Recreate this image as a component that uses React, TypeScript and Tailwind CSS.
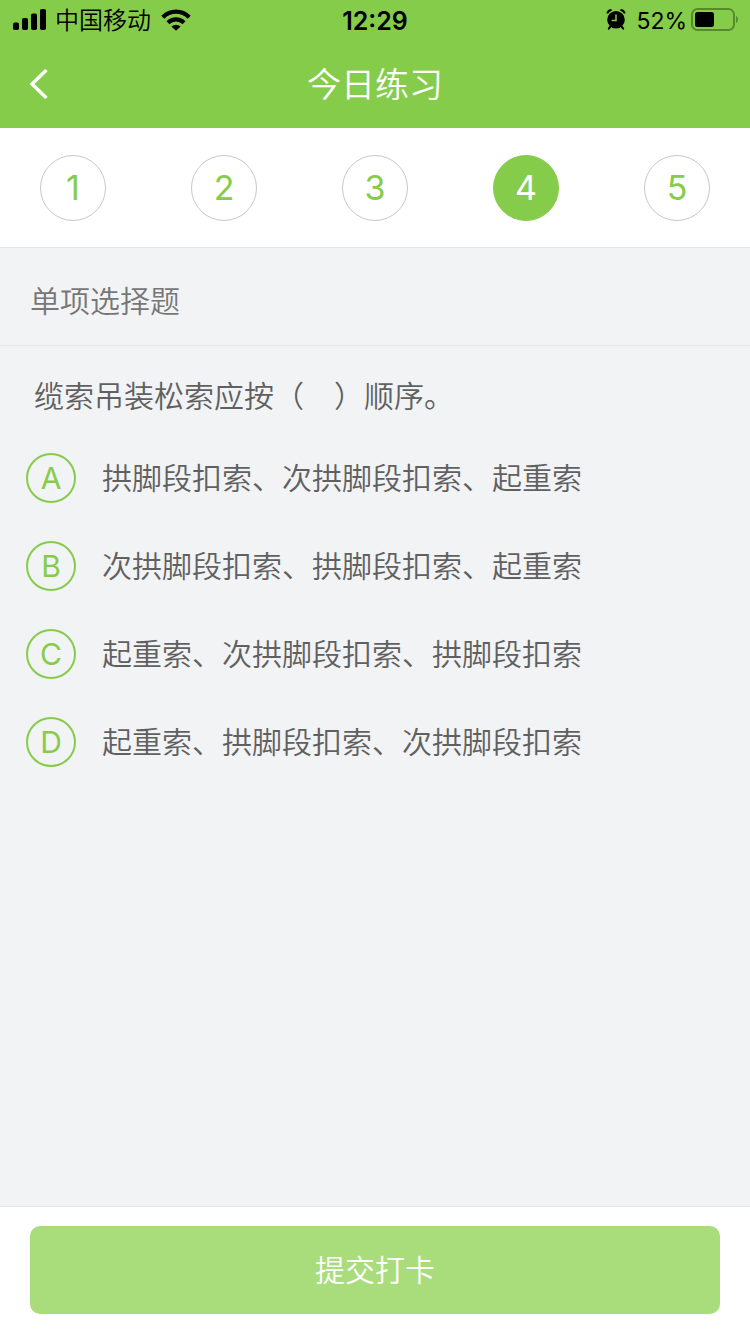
import React, { useState } from 'react';

const questionCount = 5;

const question = {
    type: '单项选择题',
    title: '缆索吊装松索应按（\u3000）顺序。',
    options: [
        { key: 'A', text: '拱脚段扣索、次拱脚段扣索、起重索' },
        { key: 'B', text: '次拱脚段扣索、拱脚段扣索、起重索' },
        { key: 'C', text: '起重索、次拱脚段扣索、拱脚段扣索' },
        { key: 'D', text: '起重索、拱脚段扣索、次拱脚段扣索' },
    ],
};

const SignalIcon: React.FC = () => (
    <svg width="34" height="22" viewBox="0 0 34 22" fill="currentColor" aria-hidden="true">
        <rect x="0" y="13.5" width="6" height="7.5" rx="1.8" />
        <rect x="9" y="9" width="6" height="12" rx="1.8" />
        <rect x="18" y="4.5" width="6" height="16.5" rx="1.8" />
        <rect x="27" y="0" width="6" height="21" rx="1.8" />
    </svg>
);

const WifiIcon: React.FC = () => (
    <svg width="30" height="22" viewBox="0 0 30 22" fill="none" stroke="currentColor" strokeWidth="4.2" aria-hidden="true">
        <path d="M1.8 8.2 A18.6 18.6 0 0 1 28.2 8.2" />
        <path d="M6.9 13.8 A11.4 11.4 0 0 1 23.1 13.8" />
        <path d="M15 21.8 L10.4 17.6 A6.4 6.4 0 0 1 19.6 17.6 Z" fill="currentColor" stroke="none" />
    </svg>
);

const AlarmIcon: React.FC = () => (
    <svg width="20" height="22" viewBox="0 0 20 22" fill="none" stroke="currentColor" aria-hidden="true">
        <circle cx="10" cy="10.8" r="8.8" fill="currentColor" stroke="none" />
        <path d="M1.6 3.6 C2.2 2.2 3.2 1.4 4.6 1.2 M18.4 3.6 C17.8 2.2 16.8 1.4 15.4 1.2" strokeWidth="2.2" strokeLinecap="round" />
        <path d="M4.5 17.4 L2.8 19.6 M15.5 17.4 L17.2 19.6" strokeWidth="2" strokeLinecap="round" />
        <path d="M10 5.4 V11.6 H5.6" stroke="#86cc4b" strokeWidth="1.5" />
    </svg>
);

const BatteryIcon: React.FC = () => (
    <svg width="48" height="24" viewBox="0 0 48 24" aria-hidden="true">
        <rect x="1" y="1" width="42" height="21" rx="5.5" fill="none" stroke="#568a2c" strokeWidth="2" />
        <rect x="4" y="4" width="19" height="15" rx="2.5" fill="currentColor" />
        <path d="M45 8 C47.6 9 47.6 14 45 15 Z" fill="#568a2c" />
    </svg>
);

const StatusBar: React.FC = () => (
    <div className="grid h-10 grid-cols-[1fr_auto_1fr] items-center px-[11px] text-2xl leading-9 text-black">
        <div className="flex items-center pl-0.5">
            <SignalIcon />
            <span className="ml-2 mr-[10px] pt-0.5 font-[350]">中国移动</span>
            <WifiIcon />
        </div>
        <div className="pt-0.5 text-center text-[25px] leading-9 font-semibold">12:29</div>
        <div className="flex items-center justify-end">
            <AlarmIcon />
            <span className="ml-[10px] mr-1 pt-0.5 text-[23px] leading-9 font-normal">52%</span>
            <BatteryIcon />
        </div>
    </div>
);

const App: React.FC = () => {
    const [current, setCurrent] = useState(4);
    const [answer, setAnswer] = useState('');

    return (
        <div className="flex min-h-screen flex-col bg-[#f2f3f5] font-['Inter','Noto_Sans_CJK_SC',sans-serif] font-[350]">
            <header className="bg-[#86cc4b]">
                <StatusBar />
                <div className="grid h-22 grid-cols-[80px_1fr_80px] items-center text-white">
                    <button type="button" aria-label="返回" className="flex h-full items-center pl-7">
                        <svg width="22" height="32" viewBox="0 0 22 32" fill="none" stroke="currentColor" strokeWidth="3.4">
                            <path d="M18.5 2 L4 16 L18.5 30" />
                        </svg>
                    </button>
                    <h1 className="pt-0.5 text-center text-[34px] leading-10 font-[350]">今日练习</h1>
                </div>
            </header>

            <nav className="flex h-30 items-center justify-between border-b border-[#e4e4e6] bg-white px-10">
                {Array.from({ length: questionCount }, (_, i) => i + 1).map(n => (
                    <button
                        key={n}
                        type="button"
                        onClick={() => setCurrent(n)}
                        className={`flex h-[66px] w-[66px] items-center justify-center rounded-full border text-[34px] leading-10 font-normal ${
                            n === current
                                ? 'border-[#86cc4b] bg-[#86cc4b] text-white'
                                : 'border-[#c8c8c8] bg-white text-[#86cc4b]'
                        }`}
                    >
                        {n}
                    </button>
                ))}
            </nav>

            <main className="flex-grow">
                <h2 className="border-b border-[#e6e7e9] px-[30px] pt-[33px] pb-6 text-[30px] leading-10 font-[350] text-[#777]">
                    {question.type}
                </h2>
                <fieldset className="pt-[30px]">
                    <legend className="float-left w-full px-[34px] text-[30px] leading-10 text-[#606060]">
                        {question.title}
                    </legend>
                    <div className="clear-both flex flex-col pt-[18px]">
                        {question.options.map(option => (
                            <label key={option.key} className="flex min-h-22 cursor-pointer items-center gap-[26px] px-[26px]">
                                <input
                                    type="radio"
                                    name="answer"
                                    value={option.key}
                                    checked={answer === option.key}
                                    onChange={() => setAnswer(option.key)}
                                    className="peer sr-only"
                                />
                                <span className="flex h-[50px] w-[50px] flex-shrink-0 items-center justify-center rounded-full border-2 border-[#86cc4b] text-[30px] leading-10 font-normal text-[#86cc4b] peer-checked:bg-[#86cc4b] peer-checked:text-white">
                                    {option.key}
                                </span>
                                <span className="text-[30px] leading-10 text-[#606060]">{option.text}</span>
                            </label>
                        ))}
                    </div>
                </fieldset>
            </main>

            <footer className="border-t border-[#e4e4e6] bg-white px-[30px] pt-[19px] pb-5">
                <button type="button" className="h-22 w-full rounded-[10px] bg-[#a9dc7a] text-[30px] leading-10 text-white">
                    提交打卡
                </button>
            </footer>
        </div>
    );
};

export default App;
